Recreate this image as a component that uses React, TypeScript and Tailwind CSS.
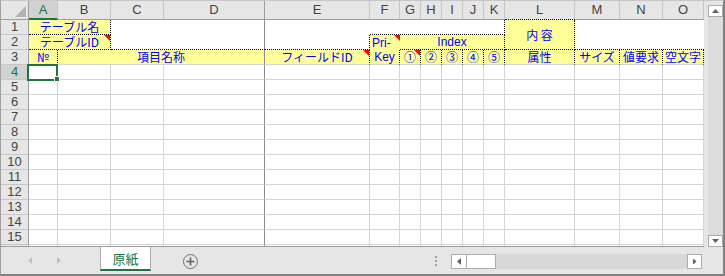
import React from 'react'

const cols = ['A', 'B', 'C', 'D', 'E', 'F', 'G', 'H', 'I', 'J', 'K', 'L', 'M', 'N', 'O']

// red comment marker in the top right corner of a cell
function Tri() {
  return <div className="absolute right-0 top-0 h-[6px] w-[6px] bg-[#ff0000] [clip-path:polygon(0_0,100%_0,100%_100%)]" />
}

function ColHeader({ name, i }: { name: string; i: number }) {
  if (i === 0)
    return (
      <div className="flex items-center justify-center border-r border-b-2 border-r-[#c6c6c6] border-b-[#217346] bg-[#d2d2d2] text-[#217346]">
        {name}
      </div>
    )
  if (i === 3)
    return (
      <div className="flex items-center justify-center border-r border-b border-r-[#9e9e9e] border-b-[#9e9e9e] bg-[#e6e6e6]">
        {name}
      </div>
    )
  if (i === 11)
    return (
      <div className="flex items-center justify-center border-r border-b border-r-[#c6c6c6] border-b-black [border-bottom-style:dotted] bg-[#e6e6e6]">
        {name}
      </div>
    )
  return (
    <div className="flex items-center justify-center border-r border-b border-r-[#c6c6c6] border-b-[#9e9e9e] bg-[#e6e6e6]">
      {name}
    </div>
  )
}

function RowHeader({ n }: { n: number }) {
  return (
    <div
      className={
        n === 4
          ? 'flex items-center justify-center border-r border-b border-r-[#9e9e9e] border-b-[#c6c6c6] bg-[#d2d2d2] text-[#217346]'
          : 'flex items-center justify-center border-r border-b border-r-[#9e9e9e] border-b-[#c6c6c6] bg-[#e6e6e6]'
      }
    >
      {n}
    </div>
  )
}

const jp = "font-['Noto_Sans_CJK_JP',sans-serif]"
const yel = `relative flex items-center justify-center bg-[#ffff99] text-[#0000ff] text-[12px] border-r border-b border-r-black [border-right-style:dotted] border-b-[#d4d4d4] ${jp}`

function BodyRow({ n }: { n: number }) {
  return (
    <>
      <RowHeader n={n} />
      {cols.map((c, i) =>
        n === 4 && i === 0 ? (
          <div key={c} className="relative border-r border-b border-[#d4d4d4]">
            <div className="absolute -left-[2px] -top-[1px] z-10 h-[17px] w-[31px] border-2 border-[#217346]" />
            <div className="absolute -bottom-[3px] -right-[3px] z-10 h-[6px] w-[6px] border border-white bg-[#217346]" />
          </div>
        ) : (
          <div
            key={c}
            className={i === 3 ? 'border-r border-b border-r-[#8c8c8c] border-b-[#d4d4d4]' : 'border-r border-b border-[#d4d4d4]'}
          />
        )
      )}
    </>
  )
}

function Sheet() {
  return (
    <div className="grid h-[246px] grid-cols-[28px_29px_53px_53px_101px_105px_30px_21px_21px_21px_21px_21px_70px_45px_43px_41px] grid-rows-[19px_repeat(15,15px)_1px] overflow-hidden border-b border-b-[#9e9e9e] font-['Liberation_Sans',sans-serif] text-[13px] leading-[14px] text-[#444]">
      {/* column headers */}
      <div className="relative border-r border-b border-r-[#9e9e9e] border-b-[#9e9e9e] bg-[#e6e6e6]">
        <div className="absolute bottom-[2px] right-[2px] h-[11px] w-[11px] bg-[#b4b4b4] [clip-path:polygon(100%_0,100%_100%,0_100%)]" />
      </div>
      {cols.map((c, i) => (
        <ColHeader key={c} name={c} i={i} />
      ))}

      {/* row 1 */}
      <RowHeader n={1} />
      <div className={`col-span-2 flex items-center justify-center border-r border-b border-dotted border-black bg-[#ffff99] text-[12px] text-[#0000ff] ${jp}`}>
        テーブル名
      </div>
      <div className="col-span-2 row-span-2 border-r border-b border-r-[#8c8c8c] border-b-black [border-bottom-style:dotted]" />
      <div />
      <div className="col-span-6 border-r border-b border-dotted border-black" />
      <div className={`row-span-2 flex items-center justify-center border-r border-b border-dotted border-black bg-[#ffff99] text-[12px] text-[#0000ff] ${jp}`}>
        内&nbsp;容
      </div>
      <div className="col-span-3 row-span-2 border-b border-dotted border-black" />

      {/* row 2 */}
      <RowHeader n={2} />
      <div className={`relative col-span-2 flex items-center justify-center border-r border-b border-dotted border-black bg-[#ffff99] text-[12px] text-[#0000ff] ${jp}`}>
        テーブルID
        <Tri />
      </div>
      <div className="border-r border-b border-dotted border-black" />
      <div className="relative flex items-center pl-[2px] bg-[#ffff99] text-[12px] text-[#0000ff]">
        Pri-
        <Tri />
      </div>
      <div className="col-span-5 flex items-center justify-center border-r border-b border-dotted border-black bg-[#ffff99] text-[12px] text-[#0000ff]">
        Index
      </div>

      {/* row 3 */}
      <RowHeader n={3} />
      <div className={yel}>№</div>
      <div className={`col-span-3 flex items-center justify-center border-r border-b border-r-[#8c8c8c] border-b-[#d4d4d4] bg-[#ffff99] text-[12px] text-[#0000ff] ${jp}`}>
        項目名称
      </div>
      <div className={yel}>
        フィールドID
        <Tri />
      </div>
      <div className="relative flex items-center justify-center border-r border-b border-r-black [border-right-style:dotted] border-b-[#d4d4d4] bg-[#ffff99] text-[12px] text-[#0000ff]">
        Key
      </div>
      <div className={yel}>
        ①
        <Tri />
      </div>
      <div className={yel}>②</div>
      <div className={yel}>③</div>
      <div className={yel}>④</div>
      <div className={yel}>⑤</div>
      <div className={yel}>属性</div>
      <div className={yel}>サイズ</div>
      <div className={yel}>値要求</div>
      <div className={yel}>空文字</div>

      {Array.from({ length: 12 }, (_, k) => (
        <BodyRow key={k} n={k + 4} />
      ))}

      {/* partial row 16 */}
      <div className="border-r border-r-[#9e9e9e] bg-[#e6e6e6]" />
      {cols.map((c, i) => (
        <div key={c} className={i === 3 ? 'border-r border-r-[#8c8c8c]' : 'border-r border-r-[#d4d4d4]'} />
      ))}
    </div>
  )
}

function VScroll() {
  return (
    <div className="flex h-[246px] w-[19px] flex-col bg-[#e6e6e6] pl-[4px]">
      <div className="mt-[4px] flex h-[12px] w-[15px] items-center justify-center border border-[#ababab] bg-white">
        <div className="h-[4px] w-[7px] bg-[#606060] [clip-path:polygon(50%_0,100%_100%,0_100%)]" />
      </div>
      <div className="w-[15px] flex-1 bg-[#dcdcdc]" />
      <div className="flex h-[12px] w-[15px] items-center justify-center border border-[#ababab] bg-white">
        <div className="h-[4px] w-[7px] bg-[#606060] [clip-path:polygon(0_0,100%_0,50%_100%)]" />
      </div>
    </div>
  )
}

function TabBar() {
  return (
    <div className="flex h-[27px] items-start bg-[#e6e6e6]">
      <div className="relative h-[27px] w-[99px]">
        <div className="absolute left-[27px] top-[10px] h-[7px] w-[4px] bg-[#c0c0c0] [clip-path:polygon(100%_0,100%_100%,0_50%)]" />
        <div className="absolute left-[56px] top-[10px] h-[7px] w-[4px] bg-[#c0c0c0] [clip-path:polygon(0_0,100%_50%,0_100%)]" />
      </div>
      <div className={`flex h-[24px] w-[51px] items-center justify-center border-x border-b-2 border-x-[#ababab] border-b-[#217346] bg-white pt-[1px] text-[13px] text-[#217346] ${jp}`}>
        原紙
      </div>
      <div className="ml-[32px] mt-[7px] flex h-[15px] w-[15px] items-center justify-center rounded-full border-[1.5px] border-[#707070]">
        <svg width="9" height="9" viewBox="0 0 9 9">
          <path d="M4.5 0.5v8M0.5 4.5h8" stroke="#606060" strokeWidth="1.6" />
        </svg>
      </div>
      <div className="ml-[237px] mt-[9px] flex flex-col gap-[2px]">
        <div className="h-[2px] w-[2px] bg-[#a0a0a0]" />
        <div className="h-[2px] w-[2px] bg-[#a0a0a0]" />
        <div className="h-[2px] w-[2px] bg-[#a0a0a0]" />
      </div>
      <div className="ml-[14px] mt-[7px] flex h-[15px] w-[251px]">
        <div className="flex h-[15px] w-[16px] items-center justify-center border border-[#ababab] bg-white">
          <div className="h-[7px] w-[4px] bg-[#606060] [clip-path:polygon(100%_0,100%_100%,0_50%)]" />
        </div>
        <div className="h-[15px] w-[29px] border border-l-0 border-[#ababab] bg-white" />
        <div className="h-[15px] flex-1 bg-[#d8d8d8]" />
        <div className="flex h-[15px] w-[15px] items-center justify-center border border-[#ababab] bg-white">
          <div className="h-[7px] w-[4px] bg-[#606060] [clip-path:polygon(0_0,100%_50%,0_100%)]" />
        </div>
      </div>
    </div>
  )
}

export default function App() {
  return (
    <div className="h-[276px] w-[725px] overflow-hidden border-t border-l border-r-2 border-b-2 border-t-[#c8c8c8] border-l-[#a0a0a0] border-r-[#808080] border-b-[#808080] bg-white font-['Noto_Sans_CJK_JP',sans-serif]">
      <div className="flex">
        <Sheet />
        <VScroll />
      </div>
      <TabBar />
    </div>
  )
}
